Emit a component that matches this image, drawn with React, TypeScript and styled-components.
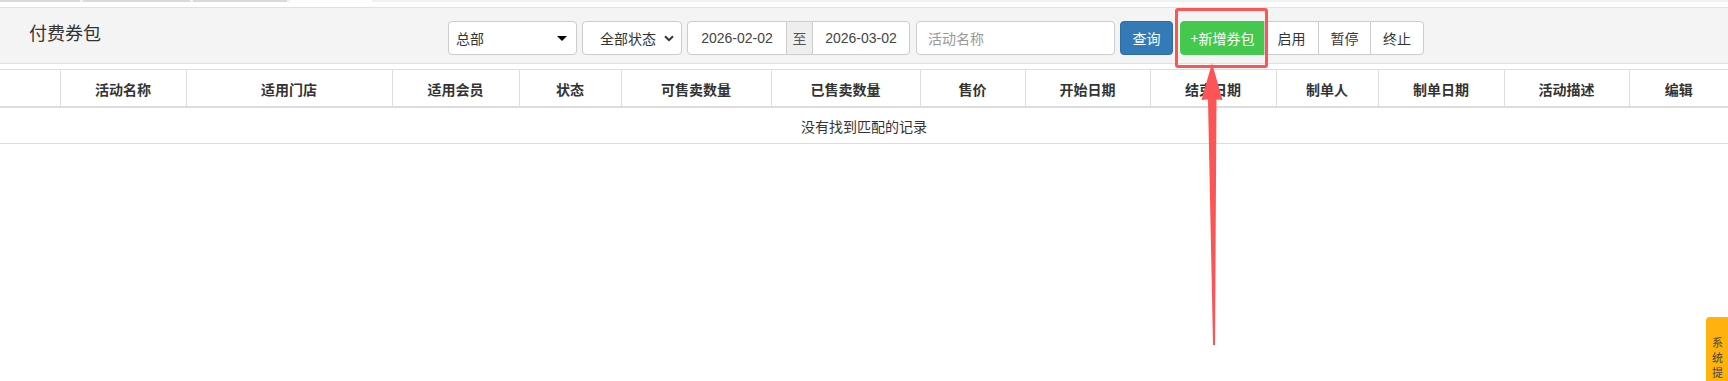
import styled, { createGlobalStyle } from 'styled-components';

const GlobalStyle = createGlobalStyle`
  html, body {
    margin: 0;
    padding: 0;
    background: #fff;
  }
  body {
    font-family: 'Liberation Sans', 'Noto Sans CJK SC', sans-serif;
    font-size: 14px;
    color: #333;
  }
  * {
    box-sizing: border-box;
  }
`;

const COLUMNS = [
  { title: '', width: 60 },
  { title: '活动名称', width: 126 },
  { title: '适用门店', width: 206 },
  { title: '适用会员', width: 127 },
  { title: '状态', width: 102 },
  { title: '可售卖数量', width: 150 },
  { title: '已售卖数量', width: 149 },
  { title: '售价', width: 105 },
  { title: '开始日期', width: 125 },
  { title: '结束日期', width: 126 },
  { title: '制单人', width: 102 },
  { title: '制单日期', width: 126 },
  { title: '活动描述', width: 125 },
  { title: '编辑', width: 99 },
];

function App() {
  return (
    <StPage>
      <GlobalStyle />
      <StTabStrip>
        <StTab $width={80} />
        <StTab $width={107} />
        <StTab $width={94} />
        <StTabBlank />
      </StTabStrip>

      <StPanel>
        <StTitle>付费券包</StTitle>
        <StToolbar>
          <StSelect $width={129}>
            <span>总部</span>
            <StCaret />
          </StSelect>
          <StSelect $width={100} $padLeft={17}>
            <span>全部状态</span>
            <svg width="10" height="7" viewBox="0 0 10 7">
              <path d="M1 1.2 L5 5.2 L9 1.2" fill="none" stroke="#333" strokeWidth="2" />
            </svg>
          </StSelect>
          <StDateGroup>
            <StDateInput $width={100} readOnly value="2026-02-02" />
            <StAddon>至</StAddon>
            <StDateInput $width={98} readOnly value="2026-03-02" $last />
          </StDateGroup>
          <StNameInput placeholder="活动名称" />
          <StQueryButton>查询</StQueryButton>
          <StButtonGroup>
            <StAddButton>+新增券包</StAddButton>
            <StGroupButton $width={55}>启用</StGroupButton>
            <StGroupButton $width={53}>暂停</StGroupButton>
            <StGroupButton $width={54} $last>
              终止
            </StGroupButton>
          </StButtonGroup>
        </StToolbar>
      </StPanel>

      <StTable>
        <colgroup>
          {COLUMNS.map((col, i) => (
            <col key={i} style={{ width: col.width }} />
          ))}
        </colgroup>
        <thead>
          <tr>
            {COLUMNS.map((col, i) => (
              <StTh key={i}>{col.title}</StTh>
            ))}
          </tr>
        </thead>
        <tbody>
          <tr>
            <StEmptyCell colSpan={COLUMNS.length}>没有找到匹配的记录</StEmptyCell>
          </tr>
        </tbody>
      </StTable>

      <StHighlight />
      <StArrow width="1728" height="381" viewBox="0 0 1728 381">
        <polygon
          points="1212,63 1222.5,100 1216.5,99.5 1215,345 1213,345 1208,99.5 1201.5,100"
          fill="#fd5555"
        />
      </StArrow>

      <StSideTab>
        <StSideText>系统提</StSideText>
      </StSideTab>
    </StPage>
  );
}

export default App;

const StPage = styled.div`
  position: relative;
  width: 1728px;
  height: 381px;
  overflow: hidden;
  background: #fff;
`;

const StTabStrip = styled.div`
  display: flex;
  height: 2px;
  margin-bottom: 5px;
  background: #f1f1f1;
`;

const StTab = styled.div<{ $width: number }>`
  width: ${({ $width }) => $width}px;
  margin-right: 3px;
  background: #d9d9de;
`;

const StTabBlank = styled.div`
  width: 82px;
  background: #fff;
`;

const StPanel = styled.div`
  display: flex;
  align-items: flex-start;
  height: 57px;
  padding: 12px 0 0 29px;
  border-top: 1px solid #e0e0e0;
  border-bottom: 1px solid #e0e0e0;
  background: #f4f4f4;
`;

const StTitle = styled.h3`
  width: 419px;
  margin: 0;
  font-family: 'Noto Sans CJK SC', sans-serif;
  font-size: 18px;
  font-weight: 400;
  line-height: 24px;
  color: #333;
`;

const StToolbar = styled.div`
  display: flex;
  align-items: center;
  margin-top: 1px;
`;

const StSelect = styled.div<{ $width: number; $padLeft?: number }>`
  display: flex;
  align-items: center;
  justify-content: space-between;
  width: ${({ $width }) => $width}px;
  height: 34px;
  margin-right: 5px;
  padding: 0 7px 0 ${({ $padLeft }) => $padLeft ?? 7}px;
  border: 1px solid #ccc;
  border-radius: 4px;
  background: #fff;
  font-family: 'Noto Sans CJK SC', sans-serif;
  font-size: 14px;
  color: #333;
`;

const StCaret = styled.i`
  width: 0;
  height: 0;
  margin-right: 2px;
  border-left: 5px solid transparent;
  border-right: 5px solid transparent;
  border-top: 5px solid #000;
`;

const StDateGroup = styled.div`
  display: flex;
  margin-right: 6px;
`;

const StDateInput = styled.input<{ $width: number; $last?: boolean }>`
  width: ${({ $width }) => $width}px;
  height: 34px;
  padding: 0;
  border: 1px solid #ccc;
  border-radius: ${({ $last }) => ($last ? '0 4px 4px 0' : '4px 0 0 4px')};
  background: #fff;
  font-family: 'Liberation Sans', sans-serif;
  font-size: 14px;
  color: #444;
  text-align: center;
  outline: none;
`;

const StAddon = styled.span`
  display: flex;
  align-items: center;
  justify-content: center;
  width: 25px;
  height: 34px;
  border-top: 1px solid #ccc;
  border-bottom: 1px solid #ccc;
  background: #eee;
  font-family: 'Noto Sans CJK SC', sans-serif;
  font-size: 14px;
  color: #555;
`;

const StNameInput = styled.input`
  width: 199px;
  height: 34px;
  margin-right: 5px;
  padding: 0 11px;
  border: 1px solid #ccc;
  border-radius: 4px;
  background: #fff;
  font-family: 'Noto Sans CJK SC', sans-serif;
  font-size: 14px;
  outline: none;

  &::placeholder {
    color: #999;
  }
`;

const StQueryButton = styled.button`
  width: 53px;
  height: 34px;
  margin-right: 7px;
  padding: 0;
  border: 1px solid #2e6da4;
  border-radius: 4px;
  background: #337ab7;
  font-family: 'Noto Sans CJK SC', sans-serif;
  font-size: 14px;
  color: #fff;
`;

const StButtonGroup = styled.div`
  display: flex;
`;

const StAddButton = styled.button`
  width: 85px;
  height: 34px;
  padding: 0;
  border: 1px solid #44c84e;
  border-radius: 4px 0 0 4px;
  background: #44c84e;
  font-family: 'Noto Sans CJK SC', sans-serif;
  font-size: 14px;
  color: #fff;
`;

const StGroupButton = styled.button<{ $width: number; $last?: boolean }>`
  width: ${({ $width }) => $width}px;
  height: 34px;
  margin-left: -1px;
  padding: 0;
  border: 1px solid #ccc;
  border-radius: ${({ $last }) => ($last ? '0 4px 4px 0' : '0')};
  background: #fff;
  font-family: 'Noto Sans CJK SC', sans-serif;
  font-size: 14px;
  color: #333;
`;

const StTable = styled.table`
  width: 1728px;
  margin-top: 5px;
  border-collapse: collapse;
  table-layout: fixed;
  border-top: 1px solid #ddd;
`;

const StTh = styled.th`
  height: 37px;
  padding: 3px 0 0;
  border-left: 1px solid #ddd;
  border-bottom: 2px solid #ddd;
  font-family: 'Noto Sans CJK SC', sans-serif;
  font-size: 14px;
  font-weight: 700;
  line-height: 32px;
  color: #333;
  text-align: center;

  &:first-child {
    border-left: none;
  }
`;

const StEmptyCell = styled.td`
  height: 37px;
  padding: 1px 0 0;
  border-bottom: 1px solid #ddd;
  font-family: 'Noto Sans CJK SC', sans-serif;
  font-size: 14px;
  line-height: 34px;
  color: #333;
  text-align: center;
`;

const StHighlight = styled.div`
  position: absolute;
  left: 1175px;
  top: 8px;
  width: 93px;
  height: 60px;
  border: 3px solid #fd5555;
  border-radius: 3px;
  pointer-events: none;
`;

const StArrow = styled.svg`
  position: absolute;
  left: 0;
  top: 0;
  pointer-events: none;
`;

const StSideTab = styled.div`
  position: absolute;
  right: 0;
  top: 317px;
  width: 22px;
  height: 64px;
  padding: 18px 0 0 6px;
  border-radius: 4px 0 0 0;
  background: #ffb10d;
`;

const StSideText = styled.div`
  width: 12px;
  font-family: 'Noto Sans CJK SC', sans-serif;
  font-size: 11px;
  line-height: 15px;
  color: #444;
  word-break: break-all;
`;
